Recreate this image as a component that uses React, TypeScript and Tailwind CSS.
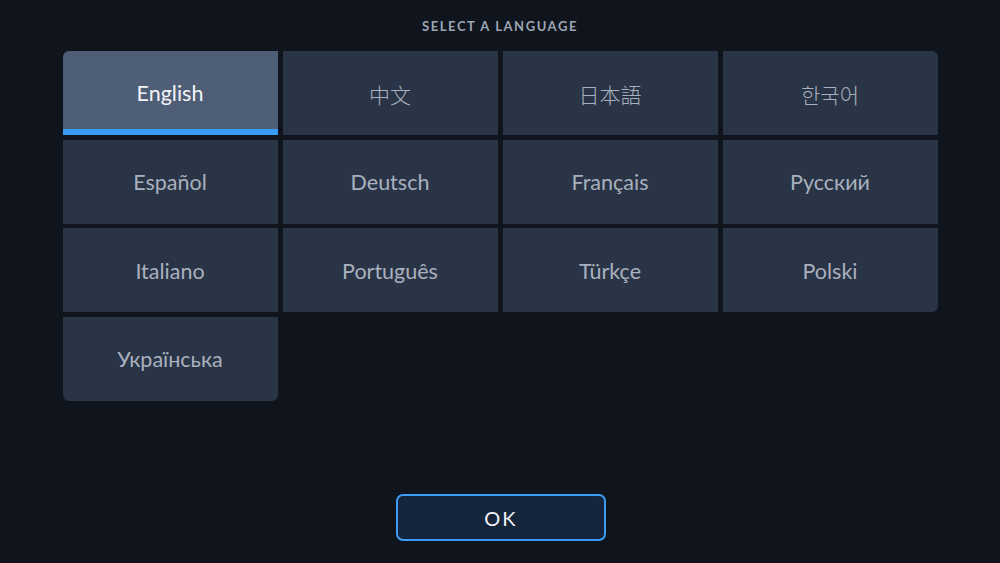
import React, { useState } from "react";

const LANGUAGES = [
  { name: "English", cjk: false },
  { name: "中文", cjk: true },
  { name: "日本語", cjk: true },
  { name: "한국어", cjk: true },
  { name: "Español", cjk: false },
  { name: "Deutsch", cjk: false },
  { name: "Français", cjk: false },
  { name: "Русский", cjk: false },
  { name: "Italiano", cjk: false },
  { name: "Português", cjk: false },
  { name: "Türkçe", cjk: false },
  { name: "Polski", cjk: false },
  { name: "Українська", cjk: false },
];

// rounded only on the outer corners of the grid
const corners: Record<number, string> = {
  0: "rounded-tl-[6px]",
  3: "rounded-tr-[6px]",
  11: "rounded-br-[6px]",
  12: "rounded-b-[6px]",
};

const App = () => {
  const [selected, setSelected] = useState(0);

  return (
    <div
      className="w-[1000px] h-[563px] bg-[#10151d] flex flex-col items-center overflow-hidden"
      style={{ fontFamily: "Lato, 'Noto Sans CJK SC', 'Noto Sans CJK KR', sans-serif" }}
    >
      <p className="mt-[18px] text-[13px] leading-[16px] font-bold tracking-[0.12em] text-[#9ca5b4]">
        SELECT A LANGUAGE
      </p>

      <div className="mt-[17px] grid grid-cols-[repeat(4,215px)] auto-rows-[84px] gap-x-[5px] gap-y-[4.67px]">
        {LANGUAGES.map((lang, i) => {
          const active = i === selected;
          return (
            <button
              key={lang.name}
              onClick={() => setSelected(i)}
              className={`relative flex items-center justify-center overflow-hidden ${
                lang.cjk ? "text-[21px] font-light pt-[3px]" : "text-[21.5px] font-normal pt-[1px]"
              } ${corners[i] ?? ""} ${
                active
                  ? "bg-[#4f5e77] text-[#f2f4f7]"
                  : "bg-[#2a3447] text-[#a9b1be]"
              }`}
            >
              <span>{lang.name}</span>
              {active ? (
                <span className="absolute left-0 right-0 bottom-0 h-[6px] bg-[#3a9cf5]" />
              ) : null}
            </button>
          );
        })}
      </div>

      <button className="mt-auto mb-[22px] ml-[2px] w-[210px] h-[47px] rounded-[7px] border-2 border-[#3a9cf5] bg-[#15253b] text-[20px] text-[#f2f4f7] tracking-[0.1em]">
        OK
      </button>
    </div>
  );
};

export default App;
